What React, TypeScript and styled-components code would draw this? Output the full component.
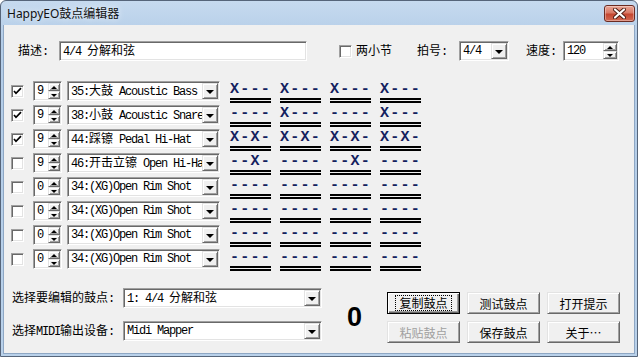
import React from 'react';
import styled, { createGlobalStyle, css } from 'styled-components';

const GlobalStyle = createGlobalStyle`
  html, body {
    margin: 0;
    padding: 0;
    background: #ffffff;
  }
  body {
    width: 638px;
    height: 357px;
    overflow: hidden;
  }
`;

const HAN = /[\u3000-\u9fff\uff00-\uffef\u2026]/;

const Window = styled.div`
  box-sizing: border-box;
  width: 638px;
  height: 357px;
  border: 1px solid #56657a;
  border-radius: 6px 6px 0 0;
  padding: 0 2px 2px 2px;
  background: linear-gradient(#c6daef, #b3cce7 40px, #b9d1ea);
  display: flex;
  flex-direction: column;
`;

const TitleBar = styled.div`
  height: 24px;
  display: flex;
  align-items: flex-start;
  justify-content: space-between;
  padding-left: 4px;
`;

const Title = styled.div`
  margin-top: 5px;
  font: 12px "Noto Sans", "Noto Sans CJK SC", sans-serif;
  line-height: 16px;
  color: #111;
  text-shadow: 0 0 6px rgba(255, 255, 255, 0.9);
`;

const CloseButton = styled.div`
  box-sizing: border-box;
  width: 31px;
  height: 17px;
  margin-top: 4px;
  border: 1px solid #6b2b22;
  border-radius: 3px;
  background: linear-gradient(#e9a596, #d97a67 45%, #c54630 55%, #d26a54);
  box-shadow: inset 0 0 0 1px rgba(255, 255, 255, 0.35);
  display: flex;
  align-items: center;
  justify-content: center;
`;

const Client = styled.div`
  flex: 1;
  background: #f0f0f0;
  border: 1px solid #8ea7c4;
  border-top: none;
  display: flex;
  flex-direction: column;
  font: 12px "Liberation Mono", monospace;
  letter-spacing: -1.2px;
  color: #000;
`;

const Han = styled.span`
  font-family: "Noto Sans CJK SC", sans-serif;
  font-size: 12px;
  letter-spacing: 0;
`;

function mixed(s: string) {
  return s
    .split(/([\u3000-\u9fff\uff00-\uffef\u2026]+)/)
    .filter(Boolean)
    .map((part, i) => (HAN.test(part) ? <Han key={i}>{part}</Han> : <span key={i}>{part}</span>));
}

const Row = styled.div<{ $top?: number; $h?: number }>`
  display: flex;
  align-items: center;
  height: ${p => p.$h ?? 20}px;
  margin-top: ${p => p.$top ?? 0}px;
`;

const Label = styled.div<{ $left: number; $w: number }>`
  margin-left: ${p => p.$left}px;
  width: ${p => p.$w}px;
  flex: none;
  white-space: pre;
  line-height: 20px;
`;

const Sunken = styled.div<{ $left?: number; $w: number }>`
  box-sizing: border-box;
  flex: none;
  margin-left: ${p => p.$left ?? 0}px;
  width: ${p => p.$w}px;
  height: 20px;
  padding: 1px;
  background: #ffffff;
  border-style: solid;
  border-width: 1px;
  border-color: #a0a0a0 #ffffff #ffffff #a0a0a0;
  box-shadow: inset 1px 1px 0 #696969, inset -1px -1px 0 #e3e3e3;
  display: flex;
  align-items: center;
`;

const FieldText = styled.div`
  flex: 1;
  min-width: 0;
  overflow: hidden;
  white-space: pre;
  padding-left: 2px;
  line-height: 16px;
`;

const raised = css`
  box-sizing: border-box;
  background: #f0f0f0;
  border-style: solid;
  border-width: 1px;
  border-color: #e3e3e3 #696969 #696969 #e3e3e3;
  box-shadow: inset 1px 1px 0 #ffffff, inset -1px -1px 0 #a0a0a0;
  display: flex;
  align-items: center;
  justify-content: center;
`;

const DropButton = styled.div`
  ${raised};
  flex: none;
  width: 16px;
  height: 16px;
  &::after {
    content: '';
    border-left: 4px solid transparent;
    border-right: 4px solid transparent;
    border-top: 4px solid #000;
    margin-top: 1px;
  }
`;

const SpinStack = styled.div<{ $w: number }>`
  flex: none;
  width: ${p => p.$w}px;
  height: 16px;
  display: flex;
  flex-direction: column;
`;

const SpinHalf = styled.div<{ $down?: boolean }>`
  ${raised};
  flex: 1;
  &::after {
    content: '';
    border-left: 3px solid transparent;
    border-right: 3px solid transparent;
    ${p =>
      p.$down
        ? css`border-top: 3px solid #000;`
        : css`border-bottom: 3px solid #000;`}
  }
`;

const CheckBox = styled.div<{ $left: number }>`
  box-sizing: border-box;
  flex: none;
  margin-left: ${p => p.$left}px;
  width: 13px;
  height: 13px;
  background: #ffffff;
  border-style: solid;
  border-width: 1px;
  border-color: #a0a0a0 #ffffff #ffffff #a0a0a0;
  box-shadow: inset 1px 1px 0 #696969, inset -1px -1px 0 #e3e3e3;
  display: flex;
  align-items: center;
  justify-content: center;
`;

const TrackList = styled.div`
  margin-top: 20px;
  display: flex;
  flex-direction: column;
`;

const TrackRow = styled.div`
  height: 24px;
  display: flex;
  align-items: flex-start;
`;

const TrackControls = styled.div`
  height: 20px;
  display: flex;
  align-items: center;
`;

const Patterns = styled.div`
  margin-left: 10px;
  display: flex;
  gap: 9px;
`;

const PatternCell = styled.div`
  width: 41px;
  display: flex;
  flex-direction: column;
`;

const PatternText = styled.div`
  height: 17px;
  padding-top: 1px;
  box-sizing: border-box;
  font: bold 15px "Liberation Mono", monospace;
  letter-spacing: 1.25px;
  line-height: 15px;
  color: #13205e;
  white-space: pre;
`;

const DoubleLine = styled.div`
  box-sizing: border-box;
  height: 5px;
  border-top: 2px solid #000;
  border-bottom: 2px solid #000;
`;

const Bottom = styled.div`
  margin-top: 15px;
  display: flex;
  align-items: stretch;
`;

const BottomFields = styled.div`
  display: flex;
  flex-direction: column;
  gap: 13px;
`;

const BigNumber = styled.div`
  margin-left: 25px;
  width: 16px;
  padding-top: 4px;
  display: flex;
  align-items: center;
  font: bold 27px "Liberation Sans", Arial, sans-serif;
  letter-spacing: 0;
  color: #000;
`;

const ButtonGrid = styled.div`
  margin-left: 24px;
  margin-top: 4px;
  display: grid;
  grid-template-columns: repeat(3, 73px);
  grid-auto-rows: 22px;
  column-gap: 7px;
  row-gap: 7px;
`;

const Button = styled.div<{ $default?: boolean; $disabled?: boolean }>`
  box-sizing: border-box;
  background: #f0f0f0;
  border: 1px solid;
  border-color: #e3e3e3 #696969 #696969 #e3e3e3;
  box-shadow: inset 1px 1px 0 #ffffff, inset -1px -1px 0 #a0a0a0;
  display: flex;
  align-items: center;
  justify-content: center;
  font: 12px "Noto Sans CJK SC", sans-serif;
  letter-spacing: 0;
  color: ${p => (p.$disabled ? '#a0a0a0' : '#000')};
  ${p =>
    p.$default &&
    css`
      border-color: #000;
      box-shadow: inset 1px 1px 0 #ffffff, inset -1px -1px 0 #696969, inset -2px -2px 0 #a0a0a0;
    `}
`;

const FocusRect = styled.span`
  border: 1px dotted #000;
  padding: 0 3px;
  line-height: 14px;
`;

const Check = () => (
  <svg width="9" height="9" viewBox="0 0 9 9">
    <path d="M1 4 L3 6.3 L8 1.2" fill="none" stroke="#000" strokeWidth="1.7" />
  </svg>
);

const CloseGlyph = () => (
  <svg width="13" height="11" viewBox="0 0 13 11">
    <path d="M2 1.5 L11 9.5 M11 1.5 L2 9.5" stroke="#4b1a12" strokeWidth="4" strokeLinecap="round" />
    <path d="M2 1.5 L11 9.5 M11 1.5 L2 9.5" stroke="#ffffff" strokeWidth="2.2" strokeLinecap="round" />
  </svg>
);

type Track = { on: boolean; vel: string; name: string; bars: string[] };

const tracks: Track[] = [
  { on: true, vel: '9', name: '35:大鼓 Acoustic Bass', bars: ['X---', 'X---', 'X---', 'X---'] },
  { on: true, vel: '9', name: '38:小鼓 Acoustic Snare', bars: ['----', 'X---', '----', 'X---'] },
  { on: true, vel: '9', name: '44:踩镲 Pedal Hi-Hat', bars: ['X-X-', 'X-X-', 'X-X-', 'X-X-'] },
  { on: false, vel: '9', name: '46:开击立镲 Open Hi-Hat', bars: ['--X-', '----', '--X-', '----'] },
  { on: false, vel: '0', name: '34:(XG)Open Rim Shot', bars: ['----', '----', '----', '----'] },
  { on: false, vel: '0', name: '34:(XG)Open Rim Shot', bars: ['----', '----', '----', '----'] },
  { on: false, vel: '0', name: '34:(XG)Open Rim Shot', bars: ['----', '----', '----', '----'] },
  { on: false, vel: '0', name: '34:(XG)Open Rim Shot', bars: ['----', '----', '----', '----'] },
];

function Combo({ left, w, text }: { left?: number; w: number; text: string }) {
  return (
    <Sunken $left={left} $w={w}>
      <FieldText>{mixed(text)}</FieldText>
      <DropButton />
    </Sunken>
  );
}

function Spin({ left, w, btn, text }: { left?: number; w: number; btn: number; text: string }) {
  return (
    <Sunken $left={left} $w={w}>
      <FieldText>{text}</FieldText>
      <SpinStack $w={btn}>
        <SpinHalf />
        <SpinHalf $down />
      </SpinStack>
    </Sunken>
  );
}

export default function App() {
  return (
    <>
      <GlobalStyle />
      <Window>
        <TitleBar>
          <Title>HappyEO鼓点编辑器</Title>
          <CloseButton>
            <CloseGlyph />
          </CloseButton>
        </TitleBar>
        <Client>
          <Row $top={16}>
            <Label $left={14} $w={41}>{mixed('描述:')}</Label>
            <Sunken $w={248}>
              <FieldText>{mixed('4/4 分解和弦')}</FieldText>
            </Sunken>
            <CheckBox $left={32} />
            <Label $left={4} $w={36}>{mixed('两小节')}</Label>
            <Label $left={25} $w={42}>{mixed('拍号:')}</Label>
            <Combo w={50} text="4/4" />
            <Label $left={17} $w={37}>{mixed('速度:')}</Label>
            <Spin w={56} btn={14} text="120" />
          </Row>

          <TrackList>
            {tracks.map((t, i) => (
              <TrackRow key={i}>
                <TrackControls>
                  <CheckBox $left={7}>{t.on && <Check />}</CheckBox>
                  <Spin left={9} w={29} btn={12} text={t.vel} />
                  <Combo left={5} w={153} text={t.name} />
                </TrackControls>
                <Patterns>
                  {t.bars.map((b, j) => (
                    <PatternCell key={j}>
                      <PatternText>{b}</PatternText>
                      <DoubleLine />
                    </PatternCell>
                  ))}
                </Patterns>
              </TrackRow>
            ))}
          </TrackList>

          <Bottom>
            <BottomFields>
              <Row>
                <Label $left={8} $w={111}>{mixed('选择要编辑的鼓点:')}</Label>
                <Combo w={199} text="1: 4/4 分解和弦" />
              </Row>
              <Row>
                <Label $left={8} $w={111}>{mixed('选择MIDI输出设备:')}</Label>
                <Combo w={199} text="Midi Mapper" />
              </Row>
            </BottomFields>
            <BigNumber>0</BigNumber>
            <ButtonGrid>
              <Button $default>
                <FocusRect>复制鼓点</FocusRect>
              </Button>
              <Button>测试鼓点</Button>
              <Button>打开提示</Button>
              <Button $disabled>粘贴鼓点</Button>
              <Button>保存鼓点</Button>
              <Button>关于…</Button>
            </ButtonGrid>
          </Bottom>
        </Client>
      </Window>
    </>
  );
}
